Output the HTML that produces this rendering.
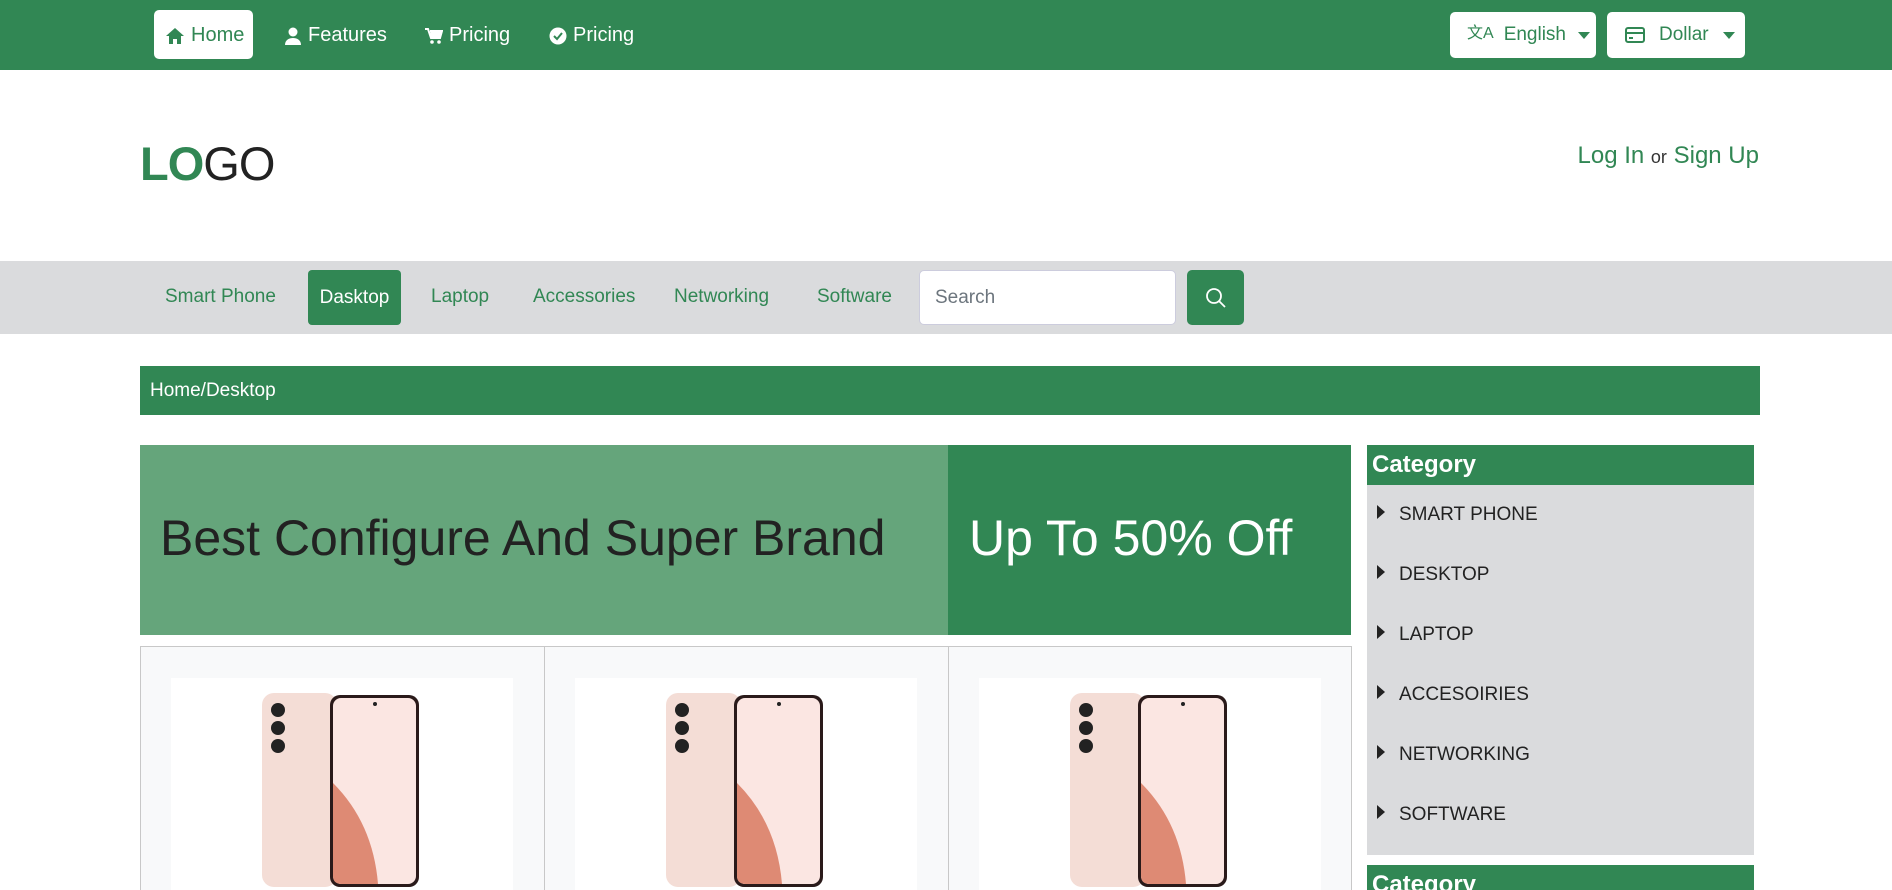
<!DOCTYPE html>
<html><head><meta charset="utf-8"><style>
*{box-sizing:border-box;margin:0;padding:0}
html,body{width:1892px;height:890px;overflow:hidden}
body{background:#fff;font-family:"Liberation Sans",sans-serif;position:relative}
.a{position:absolute}
.g{color:#318754}
.top{left:0;top:0;width:1892px;height:70px;background:#318754}
.nv{top:24px;font-size:20px;color:#fff;display:flex;align-items:center;gap:6px}
.nv.gg{color:#318754}
.btn{background:#fff;border-radius:5px}
.ci{font-size:19px;color:#222;display:flex;align-items:center;gap:14px;left:1377px}
.tri{width:0;height:0;border-left:8px solid #222;border-top:7px solid transparent;border-bottom:7px solid transparent;margin-top:-6px}
.cell{top:646px;height:320px;border:1px solid #c8c8c8;border-bottom:none;background:#f8f9fa}
.img{top:31px;left:30px;width:342px;height:290px;background:#fff}
</style></head><body>
<div class="a top"></div>
<div class="a btn" style="left:154px;top:10px;width:99px;height:49px"></div>
<div class="a nv gg" style="left:165px"><svg width="20" height="18" viewBox="0 0 20 18"><path d="M10 1L1 9h3v8h4v-5h4v5h4V9h3z" fill="#318754"/></svg>Home</div>
<div class="a nv" style="left:284px"><svg width="18" height="18" viewBox="0 0 18 18"><circle cx="9" cy="5" r="4.5" fill="#fff"/><path d="M1 18c0-5 4-7 8-7s8 2 8 7z" fill="#fff"/></svg>Features</div>
<div class="a nv" style="left:425px"><svg width="18" height="18" viewBox="0 0 18 18"><path d="M0 2h3l3 9h9l2-7H5" fill="none" stroke="#fff" stroke-width="2"/><path d="M5 4h12l-2 7H6z" fill="#fff"/><circle cx="7" cy="15" r="1.8" fill="#fff"/><circle cx="14" cy="15" r="1.8" fill="#fff"/></svg>Pricing</div>
<div class="a nv" style="left:549px"><svg width="18" height="18" viewBox="0 0 18 18"><circle cx="9" cy="9" r="8.5" fill="#fff"/><path d="M5 9l3 3 5-6" fill="none" stroke="#318754" stroke-width="2"/></svg>Pricing</div>
<div class="a btn" style="left:1450px;top:12px;width:146px;height:46px"></div>
<div class="a nv gg" style="left:1467px;font-size:19px"><span style="font-size:16px;margin-top:-8px">文A</span><span style="margin-left:4px">English</span><span style="border-top:7px solid #318754;border-left:6px solid transparent;border-right:6px solid transparent;margin-left:6px"></span></div>
<div class="a btn" style="left:1607px;top:12px;width:138px;height:46px"></div>
<div class="a nv gg" style="left:1625px;font-size:19px"><svg width="20" height="16" viewBox="0 0 20 16"><rect x="1" y="1" width="18" height="14" rx="2" fill="none" stroke="#318754" stroke-width="2"/><rect x="1" y="5" width="18" height="2" fill="#318754"/><rect x="4" y="10" width="4" height="2" fill="#318754"/></svg><span style="margin-left:8px">Dollar</span><span style="border-top:7px solid #318754;border-left:6px solid transparent;border-right:6px solid transparent;margin-left:8px"></span></div>

<div class="a" style="left:140px;top:136px;font-size:47px;color:#222;letter-spacing:-1px"><b class="g">LO</b>GO</div>
<div class="a g" style="right:133px;top:142px;font-size:24px">Log In <span style="font-size:18px;color:#333">or</span> Sign Up</div>

<div class="a" style="left:0;top:261px;width:1892px;height:73px;background:#dadbdd"></div>
<div class="a g" style="left:165px;top:286px;font-size:19px">Smart Phone</div>
<div class="a" style="left:308px;top:270px;width:93px;height:55px;background:#318754;border-radius:4px;color:#fff;font-size:19px;text-align:center;line-height:55px">Dasktop</div>
<div class="a g" style="left:431px;top:286px;font-size:19px">Laptop</div>
<div class="a g" style="left:533px;top:286px;font-size:19px">Accessories</div>
<div class="a g" style="left:674px;top:286px;font-size:19px">Networking</div>
<div class="a g" style="left:817px;top:286px;font-size:19px">Software</div>
<div class="a" style="left:919px;top:270px;width:257px;height:55px;background:#fff;border:1px solid #ccd;border-radius:5px;color:#6c757d;font-size:19px;line-height:53px;padding-left:15px">Search</div>
<div class="a" style="left:1187px;top:270px;width:57px;height:55px;background:#318754;border-radius:5px"><svg style="position:absolute;left:18px;top:17px" width="22" height="22" viewBox="0 0 22 22"><circle cx="9" cy="9" r="7" fill="none" stroke="#fff" stroke-width="1.8"/><path d="M14 14l6 6" stroke="#fff" stroke-width="1.8"/></svg></div>

<div class="a" style="left:140px;top:366px;width:1620px;height:49px;background:#318754;color:#fff;font-size:19px;line-height:50px;padding-left:10px">Home/Desktop</div>

<div class="a" style="left:140px;top:445px;width:808px;height:190px;background:#65a57b"></div>
<div class="a" style="left:948px;top:445px;width:403px;height:190px;background:#318754"></div>
<div class="a" style="left:160px;top:508px;font-size:50px;color:#222;line-height:60px">Best Configure And Super Brand</div>
<div class="a" style="left:969px;top:508px;font-size:50px;color:#fff;line-height:60px">Up To 50% Off</div>

<div class="a cell" style="left:140px;width:405px"><div class="a img"></div></div>
<div class="a cell" style="left:544px;width:405px"><div class="a img"></div></div>
<div class="a cell" style="left:948px;width:404px"><div class="a img"></div></div>
<svg class="a" style="left:0;top:0" width="1892" height="890">
<defs><g id="ph"><rect x="0" y="0" width="75" height="194" rx="12" fill="#f4ddd6"/><circle cx="16" cy="17" r="7" fill="#222"/><circle cx="16" cy="35" r="7" fill="#222"/><circle cx="16" cy="53" r="7" fill="#222"/><rect x="68" y="2" width="89" height="192" rx="10" fill="#2a1a1a"/><rect x="71" y="5" width="83" height="186" rx="8" fill="#fbe6e2"/><path d="M71 90q40 40 45 101H80q-9 0-9-8z" fill="#de8a74"/><circle cx="113" cy="11" r="2" fill="#222"/></g></defs>
<use href="#ph" x="262" y="693"/><use href="#ph" x="666" y="693"/><use href="#ph" x="1070" y="693"/>
</svg>

<div class="a" style="left:1367px;top:445px;width:387px;height:40px;background:#318754;color:#fff;font-size:24px;font-weight:bold;line-height:40px;padding-left:5px">Category</div>
<div class="a" style="left:1367px;top:485px;width:387px;height:370px;background:#dadbdd"></div>
<div class="a ci" style="top:504px"><i class="tri"></i>SMART PHONE</div>
<div class="a ci" style="top:564px"><i class="tri"></i>DESKTOP</div>
<div class="a ci" style="top:624px"><i class="tri"></i>LAPTOP</div>
<div class="a ci" style="top:684px"><i class="tri"></i>ACCESOIRIES</div>
<div class="a ci" style="top:744px"><i class="tri"></i>NETWORKING</div>
<div class="a ci" style="top:804px"><i class="tri"></i>SOFTWARE</div>
<div class="a" style="left:1367px;top:865px;width:387px;height:40px;background:#318754;color:#fff;font-size:24px;font-weight:bold;line-height:40px;padding-left:5px">Category</div>
</body></html>
